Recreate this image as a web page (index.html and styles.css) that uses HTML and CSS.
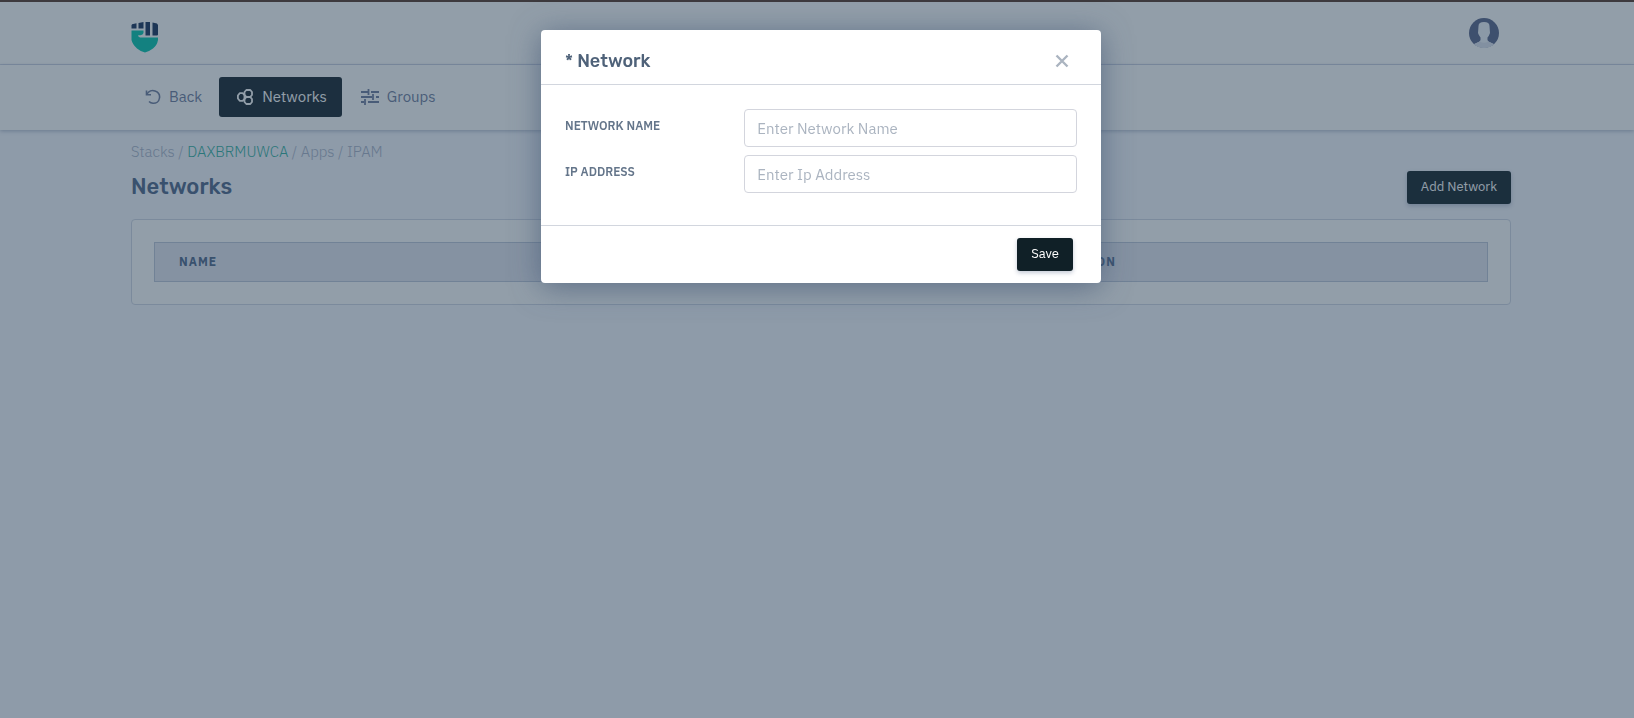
FILE: index.html
```html
<!DOCTYPE html>
<html lang="en">
<head>
  <meta charset="utf-8">
  <meta name="viewport" content="width=device-width, initial-scale=1">
  <title>Networks</title>
  <link rel="stylesheet" href="styles.css">
</head>
<body>
  <!-- Top bar -->
  <header class="topbar">
    <div class="container topbar-inner">
      <a class="logo" href="#" aria-label="Home">
        <svg width="28" height="32" viewBox="0 0 28 32">
          <g fill="#152e59">
            <path d="M1 3.200L5.500 2.200V7.500H.5V4.500Z"/>
            <path d="M7.500 2L12.500 1V7.500H7.500Z"/>
            <path d="M14.500 1H19V14.500H14.500Z"/>
            <path d="M21.500 1.500L26 2.500L27 4V13.500Q27 14.500 26 14.500H21.500Z"/>
          </g>
          <path d="M.5 9.500H12.500V12Q12 14 9.500 14.200H7.500Q6.500 14.500 7.500 15.500L9 16.500H27V19Q26 24.500 22 27.500Q18 30.500 14 31.500Q9.500 30.500 6 27.500Q1.500 23.500 .5 19Z" fill="#00c5ad"/>
        </svg>
      </a>
      <a class="avatar" href="#" aria-label="Profile">
        <svg width="30" height="30" viewBox="0 0 30 30">
          <clipPath id="round"><circle cx="15" cy="15" r="15"/></clipPath>
          <g clip-path="url(#round)">
            <rect width="30" height="30" fill="#576288"/>
            <path d="M9.500 8Q9.500 4 15 4Q20.500 4 20.500 8L21 15Q20 18 18.500 19.500V22Q19 24 25 26V30H5V26Q11 24 11.500 22V19.500Q9.500 17 9 15Z" fill="#f1f4fa"/>
            <path d="M4 27Q8 24 11 23.500Q15 26 19 23.500Q22 24 26 27V30H4Z" fill="#dfe3ee"/>
          </g>
        </svg>
      </a>
    </div>
  </header>

  <!-- Section navigation -->
  <nav class="subnav">
    <div class="container subnav-inner">
      <a class="nav-link" href="#">
        <svg width="16" height="16" viewBox="0 0 16 16" fill="none" stroke="currentColor" stroke-width="1.600">
          <path d="M1.500 1.500V5.800H6"/>
          <path d="M1.800 5.500C3.500 2 7 1 10 2C13 3 15 5.500 14.500 9C14 12.500 11 14.500 8 14.300C6.500 14.200 5 13.500 4 12.500"/>
        </svg>
        Back
      </a>
      <a class="nav-link active" href="#">
        <svg width="17" height="16" viewBox="0 0 17 16" fill="none" stroke="currentColor" stroke-width="1.800" stroke-linejoin="round">
          <path d="M2.700 4.200H5.700L7.500 6V10L5.700 11.800H2.700L.9 9.500V6.500Z"/>
          <path d="M9.300 1H13.300L15 3V6L13.300 7.800H9.300L7.500 6V3Z"/>
          <path d="M9.300 8.200H13.300L15 10V13L13.300 15H9.300L7.500 13V10Z"/>
        </svg>
        Networks
      </a>
      <a class="nav-link" href="#">
        <svg width="18" height="16" viewBox="0 0 18 16" fill="none" stroke="currentColor" stroke-width="1.800">
          <path d="M0 3H7M7.500 0V6M10 3H18M0 8H11M12 5V11M15 8H18M0 13H3M4 10V16M7 13H18"/>
        </svg>
        Groups
      </a>
    </div>
  </nav>

  <!-- Page content -->
  <main class="page">
    <div class="container">
      <div class="breadcrumb">
        <a href="#">Stacks</a> / <a class="current" href="#">DAXBRMUWCA</a> / <a href="#">Apps</a> / <a href="#">IPAM</a>
      </div>
      <div class="page-head">
        <h1>Networks</h1>
        <button class="btn" type="button">Add Network</button>
      </div>
      <div class="card">
        <table class="table">
          <thead>
            <tr>
              <th class="col-name">Name</th>
              <th>Action</th>
            </tr>
          </thead>
        </table>
      </div>
    </div>
  </main>

  <!-- Network dialog -->
  <div class="overlay">
    <form class="modal" role="dialog" aria-labelledby="modal-title">
      <div class="modal-header">
        <h2 id="modal-title">* Network</h2>
        <button class="close" type="button" aria-label="Close">
          <svg width="14" height="14" viewBox="0 0 14 14" stroke="currentColor" stroke-width="2.400"><path d="M1.500 1.500L12.500 12.500M12.500 1.500L1.500 12.500"/></svg>
        </button>
      </div>
      <div class="modal-body">
        <div class="field">
          <label for="network-name">Network Name</label>
          <input id="network-name" type="text" placeholder="Enter Network Name">
        </div>
        <div class="field">
          <label for="ip-address">Ip Address</label>
          <input id="ip-address" type="text" placeholder="Enter Ip Address">
        </div>
      </div>
      <div class="modal-footer">
        <button class="btn" type="button">Save</button>
      </div>
    </form>
  </div>
</body>
</html>
```
FILE: styles.css
```css
* {
  box-sizing: border-box;
}
body {
  margin: 0;
  background: #f6f8fe;
  color: #5b6c8c;
  font-family: "IBM Plex Sans", Roboto, sans-serif;
  font-size: 15px;
  line-height: 24px;
}
a {
  color: inherit;
  text-decoration: none;
}
svg {
  display: block;
}
.container {
  max-width: 1380px;
  margin: 0 auto;
}

/* Top bar */
.topbar {
  background: #fff;
  border-top: 2px solid #553729;
  border-bottom: 1px solid #d5daea;
  padding-left: 8px;
}
.topbar-inner {
  display: flex;
  align-items: center;
  justify-content: space-between;
  height: 62px;
  padding-right: 12px;
}
.logo {
  padding-top: 8px;
}

/* Section navigation */
.subnav {
  background: #fff;
  padding: 12px 0 13px 8px;
  box-shadow: 0 1px 4px rgba(60, 80, 120, 0.4);
}
.subnav-inner {
  display: flex;
  gap: 2px;
}
.nav-link {
  display: flex;
  align-items: center;
  gap: 8px;
  height: 40px;
  padding: 0 15px 0 14px;
  border-radius: 3px;
  color: #6d7b9d;
}
.nav-link.active {
  background: #13202a;
  color: #fff;
  padding: 0 15px 0 18px;
}
.nav-link.active + .nav-link {
  padding-left: 17px;
}

/* Page content */
.page {
  padding: 10px 0 0 8px;
}
.breadcrumb {
  color: #a8b2c8;
  font-weight: 300;
}
.breadcrumb .current {
  color: #2fb0a0;
}
.page-head {
  display: flex;
  align-items: center;
  justify-content: space-between;
  margin: 7px 0 15px;
}
h1 {
  margin: 0;
  padding-bottom: 2px;
  color: #4c6488;
  font-family: Rubik, Roboto, sans-serif;
  font-size: 22px;
  font-weight: 500;
  line-height: 30px;
}
.btn {
  height: 33px;
  padding: 0 14px 2px;
  border: 0;
  border-radius: 3px;
  background: #102027;
  color: #fff;
  font: inherit;
  font-size: 13px;
  line-height: 20px;
  box-shadow: 0 2px 4px rgba(60, 80, 120, 0.3);
  cursor: pointer;
}
.card {
  padding: 22px;
  border: 1px solid #d0d6e4;
  border-radius: 4px;
  background: #fff;
}
.table {
  width: 100%;
  border: 1px solid #bcc6d8;
  border-spacing: 0;
  background: #e5e7f1;
}
.table th {
  height: 38px;
  padding: 0 24px;
  color: #4c6488;
  font-size: 12px;
  font-weight: 700;
  letter-spacing: 1px;
  line-height: 20px;
  text-align: left;
  text-transform: uppercase;
}
.table .col-name {
  width: 66.5%;
}

/* Network dialog */
.overlay {
  position: fixed;
  inset: 0;
  padding: 30px 0 0 8px;
  background: rgba(37, 61, 83, 0.5);
}
.modal {
  max-width: 560px;
  margin: 0 auto;
  border-radius: 4px;
  background: #fff;
  box-shadow: 0 4px 30px rgba(70, 90, 120, 0.7);
}
.modal-header {
  display: flex;
  align-items: center;
  justify-content: space-between;
  padding: 19px 32px 11px 24px;
  border-bottom: 1px solid #d2d6de;
}
h2 {
  margin: 0;
  color: #4f6279;
  font-family: Rubik, Roboto, sans-serif;
  font-size: 18px;
  font-weight: 500;
  line-height: 24px;
}
.close {
  padding: 0;
  border: 0;
  background: none;
  color: #abb4c0;
  cursor: pointer;
}
.modal-body {
  display: grid;
  gap: 8px;
  padding: 24px 24px 32px;
}
.field {
  display: grid;
  grid-template-columns: 35% 65%;
}
.field label {
  padding-top: 7px;
  color: #64758a;
  font-size: 12px;
  font-weight: 600;
  line-height: 20px;
  text-transform: uppercase;
}
.field input {
  width: 100%;
  height: 38px;
  padding: 0 12px;
  border: 1px solid #d3d5dd;
  border-radius: 4px;
  background: #fff;
  color: #4f6279;
  font: inherit;
}
.field input::placeholder {
  color: #abb4c0;
}
.modal-footer {
  display: flex;
  justify-content: flex-end;
  padding: 12px 28px;
  border-top: 1px solid #d2d6de;
}
```
